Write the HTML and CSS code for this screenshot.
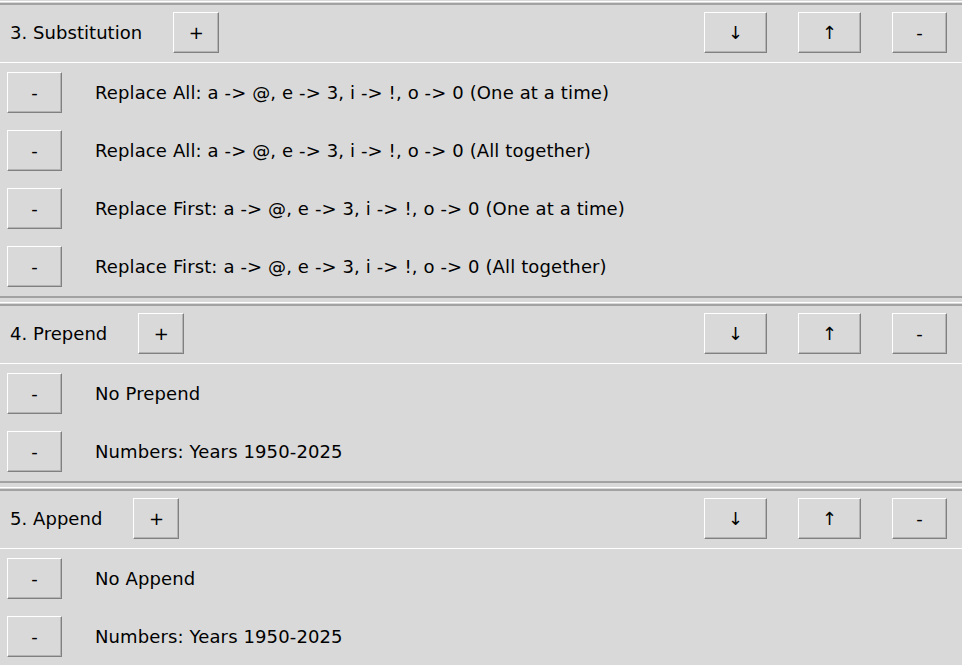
FILE: index.html
```html
<!DOCTYPE html>
<html>
<head>
<meta charset="utf-8">
<link rel="stylesheet" href="styles.css">
</head>
<body>
<div class="page">
  <section class="section">
    <div class="sec-top"></div>
    <div class="header">
      <span class="title">3. Substitution</span>
      <button class="btn btn-plus">+</button>
      <span class="spacer"></span>
      <button class="btn btn-arrow">↓</button>
      <button class="btn btn-arrow">↑</button>
      <button class="btn btn-minus">-</button>
    </div>
    <div class="divider"></div>
    <div class="rows">
      <div class="row"><button class="btn btn-minus">-</button><span class="item">Replace All: a -&gt; @, e -&gt; 3, i -&gt; !, o -&gt; 0 (One at a time)</span></div>
      <div class="row"><button class="btn btn-minus">-</button><span class="item">Replace All: a -&gt; @, e -&gt; 3, i -&gt; !, o -&gt; 0 (All together)</span></div>
      <div class="row"><button class="btn btn-minus">-</button><span class="item">Replace First: a -&gt; @, e -&gt; 3, i -&gt; !, o -&gt; 0 (One at a time)</span></div>
      <div class="row"><button class="btn btn-minus">-</button><span class="item">Replace First: a -&gt; @, e -&gt; 3, i -&gt; !, o -&gt; 0 (All together)</span></div>
    </div>
    <div class="sec-end"></div>
  </section>
  <section class="section">
    <div class="sec-top"></div>
    <div class="header">
      <span class="title">4. Prepend</span>
      <button class="btn btn-plus">+</button>
      <span class="spacer"></span>
      <button class="btn btn-arrow">↓</button>
      <button class="btn btn-arrow">↑</button>
      <button class="btn btn-minus">-</button>
    </div>
    <div class="divider"></div>
    <div class="rows">
      <div class="row"><button class="btn btn-minus">-</button><span class="item">No Prepend</span></div>
      <div class="row"><button class="btn btn-minus">-</button><span class="item">Numbers: Years 1950-2025</span></div>
    </div>
    <div class="sec-end"></div>
  </section>
  <section class="section">
    <div class="sec-top"></div>
    <div class="header">
      <span class="title">5. Append</span>
      <button class="btn btn-plus">+</button>
      <span class="spacer"></span>
      <button class="btn btn-arrow">↓</button>
      <button class="btn btn-arrow">↑</button>
      <button class="btn btn-minus">-</button>
    </div>
    <div class="divider"></div>
    <div class="rows">
      <div class="row"><button class="btn btn-minus">-</button><span class="item">No Append</span></div>
      <div class="row"><button class="btn btn-minus">-</button><span class="item">Numbers: Years 1950-2025</span></div>
    </div>
    <div class="sec-end"></div>
  </section>
</div>
</body>
</html>
```
FILE: styles.css
```css
html, body {
  margin: 0;
  padding: 0;
  background: #d9d9d9;
}
body {
  width: 962px;
  height: 665px;
  overflow: hidden;
  font-family: "DejaVu Sans", sans-serif;
  font-size: 18px;
  color: #000;
}
.page {
  padding-top: 1px;
}
.section {
  display: flex;
  flex-direction: column;
}
.sec-top {
  height: 1px;
  border-top: 1px solid #ffffff;
  border-bottom: 2px solid #a2a2a2;
}
.header {
  display: flex;
  align-items: center;
  padding: 7px 15px 9px 10px;
}
.title {
  line-height: 41px;
  letter-spacing: 0.05px;
}
.spacer {
  flex: 1;
}
.divider {
  height: 1px;
  background: #ffffff;
  margin-bottom: 1px;
}
.row {
  display: flex;
  align-items: center;
  padding: 8px 0 9px 7px;
}
.item {
  margin-left: 33px;
  line-height: 41px;
  letter-spacing: 0.12px;
}
.sec-end {
  height: 2px;
  background: #a2a2a2;
  margin-bottom: 4px;
}
.btn {
  box-sizing: border-box;
  height: 41px;
  margin: 0;
  padding: 0;
  background: #d9d9d9;
  font-family: "DejaVu Sans", sans-serif;
  font-size: 18px;
  color: #000;
  border: 1px solid;
  border-color: #ffffff #808080 #808080 #ffffff;
  box-shadow: inset -1px -1px 0 #b4b4b4;
  display: flex;
  align-items: center;
  justify-content: center;
}
.btn-plus {
  width: 46px;
  margin-left: 31px;
}
.btn-arrow {
  width: 63px;
  margin-right: 31px;
}
.btn-minus {
  width: 55px;
}
```
